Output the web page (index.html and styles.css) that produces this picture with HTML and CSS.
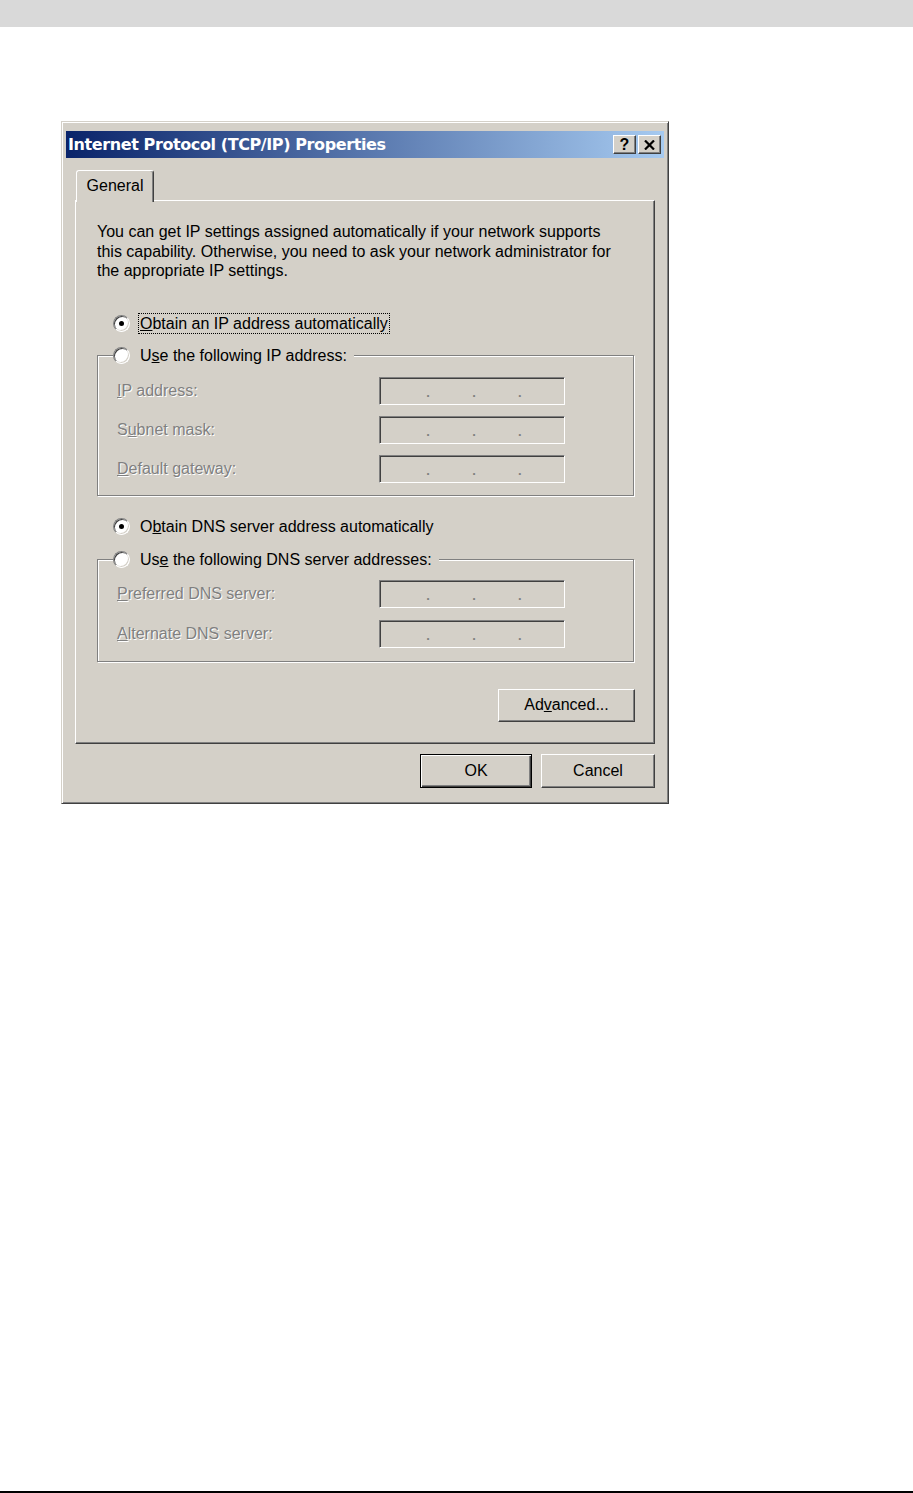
FILE: index.html
```
<!DOCTYPE html>
<html lang="en">
<head>
    <meta charset="UTF-8">
    <title>Internet Protocol (TCP/IP) Properties</title>
    <link rel="stylesheet" href="styles.css">
</head>
<body>
    <div class="page">
        <div class="topbar"></div>

        <div class="dialog">
            <div class="titlebar">
                <span class="title">Internet Protocol (TCP/IP) Properties</span>
                <div class="caption-btns">
                    <span class="cbtn help">?</span>
                    <span class="cbtn">
                        <svg width="11" height="10" viewBox="0 0 11 10">
                            <path d="M1 0.5 L10 9.5 M10 0.5 L1 9.5" stroke="#000" stroke-width="2.2" fill="none"/>
                        </svg>
                    </span>
                </div>
            </div>

            <div class="tabs">
                <div class="tab">General</div>
            </div>

            <div class="panel">
                <p class="intro">You can get IP settings assigned automatically if your network supports<br>this capability. Otherwise, you need to ask your network administrator for<br>the appropriate IP settings.</p>

                <label class="opt first">
                    <span class="radio on"></span>
                    <span class="opt-text focus"><u>O</u>btain an IP address automatically</span>
                </label>

                <fieldset class="group ip-group">
                    <legend>
                        <label class="opt">
                            <span class="radio"></span>
                            <span class="opt-text">U<u>s</u>e the following IP address:</span>
                        </label>
                    </legend>
                    <div class="fields">
                        <span class="field-label"><u>I</u>P address:</span>
                        <div class="ipbox"><span>.</span><span>.</span><span>.</span></div>
                        <span class="field-label">S<u>u</u>bnet mask:</span>
                        <div class="ipbox"><span>.</span><span>.</span><span>.</span></div>
                        <span class="field-label"><u>D</u>efault gateway:</span>
                        <div class="ipbox"><span>.</span><span>.</span><span>.</span></div>
                    </div>
                </fieldset>

                <label class="opt dns-auto">
                    <span class="radio on"></span>
                    <span class="opt-text">O<u>b</u>tain DNS server address automatically</span>
                </label>

                <fieldset class="group dns-group">
                    <legend>
                        <label class="opt">
                            <span class="radio"></span>
                            <span class="opt-text">Us<u>e</u> the following DNS server addresses:</span>
                        </label>
                    </legend>
                    <div class="fields wide-gap">
                        <span class="field-label"><u>P</u>referred DNS server:</span>
                        <div class="ipbox"><span>.</span><span>.</span><span>.</span></div>
                        <span class="field-label"><u>A</u>lternate DNS server:</span>
                        <div class="ipbox"><span>.</span><span>.</span><span>.</span></div>
                    </div>
                </fieldset>

                <button class="btn advanced">Ad<u>v</u>anced...</button>
            </div>

            <div class="actions">
                <button class="btn default">OK</button>
                <button class="btn cancel">Cancel</button>
            </div>
        </div>

        <div class="footer-line"></div>
    </div>
</body>
</html>
```

FILE: styles.css
```
* {
    box-sizing: border-box;
}
body {
    margin: 0;
    background: #fff;
    color: #000;
    font-family: "Liberation Sans", Arial, sans-serif;
    font-size: 16px;
}
.page {
    display: flex;
    flex-direction: column;
    height: 1493px;
}
.topbar {
    height: 27px;
    flex-shrink: 0;
    background: #d9d9d9;
}
.dialog {
    width: 608px;
    height: 683px;
    margin: 94px 0 0 61px;
    padding: 9px 4px 4px;
    display: flex;
    flex-direction: column;
    background: #d4d0c8;
    border: 1px solid;
    border-color: #d4d0c8 #404040 #404040 #d4d0c8;
    box-shadow: inset 1px 1px #fff, inset -1px -1px #808080;
}
.titlebar {
    height: 27px;
    flex-shrink: 0;
    display: flex;
    align-items: center;
    justify-content: space-between;
    padding: 0 3px 0 2px;
    background: linear-gradient(to right, #0a246a, #a6caf0);
}
.title {
    color: #fff;
    font-family: "DejaVu Sans", Verdana, sans-serif;
    font-weight: bold;
    font-size: 16px;
    letter-spacing: -0.4px;
}
.caption-btns {
    display: flex;
    gap: 2px;
}
.cbtn {
    width: 23px;
    height: 19px;
    display: flex;
    align-items: center;
    justify-content: center;
    background: #d4d0c8;
    border: 1px solid;
    border-color: #fff #404040 #404040 #fff;
    box-shadow: inset -1px -1px #808080;
    font-weight: bold;
    font-size: 16px;
    line-height: 1;
}
.tabs {
    display: flex;
    margin: 12px 0 0 10px;
    position: relative;
    z-index: 1;
}
.tab {
    width: 78px;
    height: 32px;
    margin-bottom: -2px;
    padding-bottom: 2px;
    display: flex;
    align-items: center;
    justify-content: center;
    background: #d4d0c8;
    border: 1px solid;
    border-bottom: 0;
    border-color: #fff #404040 transparent #fff;
    border-radius: 3px 3px 0 0;
    box-shadow: inset -1px 0 #808080;
}
.panel {
    height: 544px;
    margin: 0 9px;
    padding: 21px 20px 0 21px;
    display: flex;
    flex-direction: column;
    border: 1px solid;
    border-color: #fff #404040 #404040 #fff;
    box-shadow: inset -1px -1px #808080;
}
.intro {
    margin: 0;
    line-height: 19.5px;
}
.opt {
    display: flex;
    align-items: center;
    gap: 8px;
    height: 21px;
}
.opt.first {
    margin: 32px 0 0 16px;
}
.opt.dns-auto {
    margin: 20px 0 0 16px;
}
.opt-text {
    padding: 0 1px;
    border: 1px solid transparent;
    line-height: 19px;
}
.opt-text.focus {
    border: 1px dotted #000;
}
.radio {
    width: 17px;
    height: 17px;
    flex-shrink: 0;
    display: flex;
    align-items: center;
    justify-content: center;
    border-radius: 50%;
    background: #fff;
    border: 1px solid;
    border-color: #808080 #fff #fff #808080;
    box-shadow: inset 1px 1px #404040, inset -1px -1px #d4d0c8;
}
.radio.on::after {
    content: "";
    width: 5px;
    height: 5px;
    border-radius: 50%;
    background: #000;
}
.group {
    margin: 11px 0 0;
    padding: 11px 0 12px;
    border: 1px solid #808080;
    box-shadow: inset 1px 1px #fff, 1px 1px #fff;
}
.dns-group {
    margin-top: 12px;
    padding-top: 10px;
    padding-bottom: 13px;
}
.group legend {
    margin-left: 15px;
    padding: 0 5px 0 0;
    background: #d4d0c8;
}
.fields {
    display: grid;
    grid-template-columns: 262px 186px;
    row-gap: 11px;
    align-items: center;
    margin-left: 19px;
}
.fields.wide-gap {
    row-gap: 12px;
}
.field-label {
    color: #808080;
    text-shadow: 1px 1px 0 #fff;
}
.ipbox {
    height: 28px;
    display: flex;
    justify-content: space-evenly;
    align-items: flex-end;
    padding: 0 0 5px 4px;
    background: #d4d0c8;
    border: 1px solid;
    border-color: #808080 #fff #fff #808080;
    box-shadow: inset 1px 1px #404040, inset -1px -1px #d4d0c8;
    color: #808080;
    font-size: 13px;
    font-weight: bold;
    line-height: 1;
}
.btn {
    height: 34px;
    padding: 0;
    font-family: inherit;
    font-size: 16px;
    color: #000;
    background: #d4d0c8;
    border: 1px solid;
    border-color: #fff #404040 #404040 #fff;
    box-shadow: inset -1px -1px #808080;
}
.advanced {
    width: 137px;
    height: 33px;
    margin-top: 27px;
    align-self: flex-end;
    margin-right: -1px;
}
.actions {
    display: flex;
    justify-content: flex-end;
    gap: 9px;
    margin: 10px 9px 0 0;
}
.default {
    width: 112px;
    border: 1px solid #000;
    box-shadow: inset 1px 1px #fff, inset -1px -1px #404040, inset -2px -2px #808080;
}
.cancel {
    width: 114px;
}
.footer-line {
    margin-top: auto;
    margin-bottom: 0;
    height: 2px;
    background: #000;
}
```
